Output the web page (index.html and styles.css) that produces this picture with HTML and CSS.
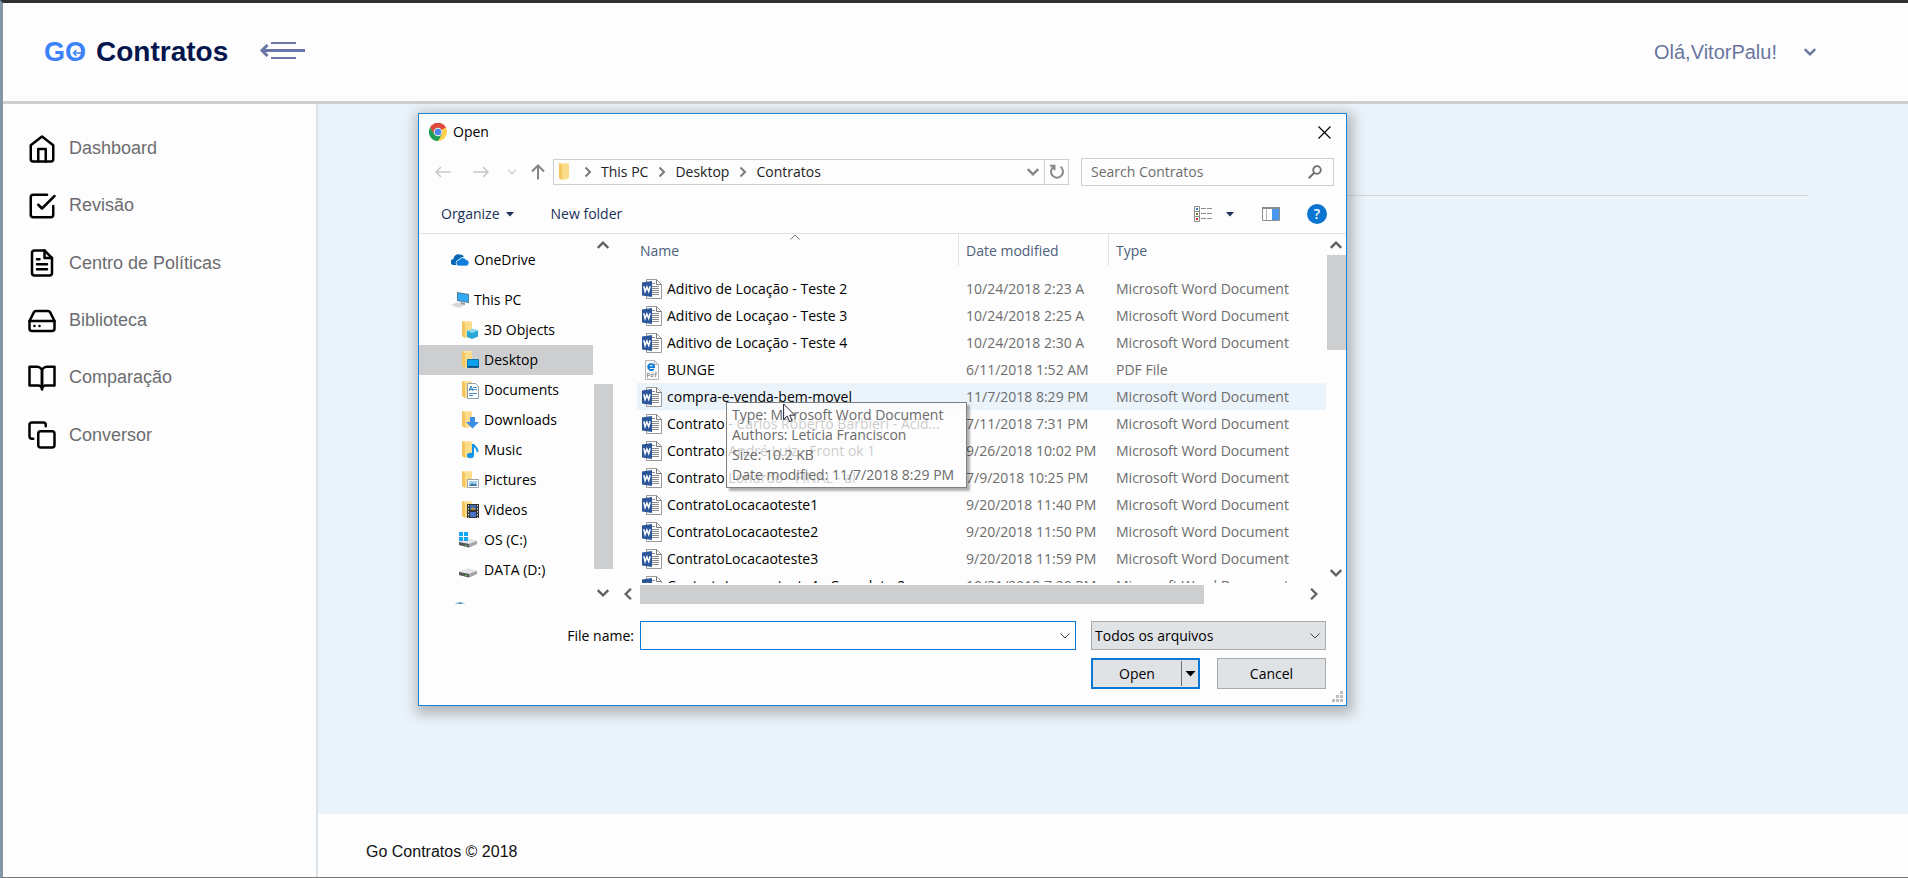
FILE: index.html
```html
<!DOCTYPE html>
<html lang="pt-BR">
<head>
    <meta charset="UTF-8">
    <meta name="viewport" content="width=device-width, initial-scale=1.0">
    <title>Go Contratos</title>
    <link rel="stylesheet" href="styles.css">
</head>
<body>
    <!-- Shared icons -->
    <svg class="sprite" aria-hidden="true">
        <symbol id="chevron-down" viewBox="0 0 12 12"><path d="M1.5 3.5L6 8l4.5-4.5" fill="none" stroke="currentColor"/></symbol>
        <symbol id="chevron-up" viewBox="0 0 12 12"><path d="M1.5 8.5L6 4l4.5 4.5" fill="none" stroke="currentColor"/></symbol>
        <symbol id="chevron-left" viewBox="0 0 12 12"><path d="M8.5 1.5L4 6l4.5 4.5" fill="none" stroke="currentColor"/></symbol>
        <symbol id="chevron-right" viewBox="0 0 12 12"><path d="M3.5 1.5L8 6l-4.5 4.5" fill="none" stroke="currentColor"/></symbol>
        <symbol id="caret" viewBox="0 0 10 6"><path d="M0 0h10L5 5.5z" fill="currentColor"/></symbol>
        <symbol id="word" viewBox="0 0 20 20">
            <path d="M4.5.5h10l5 5v14h-15z" fill="#fff" stroke="#9a9a9a"/>
            <path d="M14.500.5v5h5" fill="none" stroke="#7a7a7a"/>
            <path d="M10 4.500h3M10 7.500h7M10 9.500h7M10 11.500h7M10 13.500h7M10 15.500h7" stroke="#8a8a8a"/>
            <path d="M0 3.500L10 2v16L0 16.500z" fill="#2b579a"/>
            <path d="M1.800 7.300l1.300 5.200L4.900 8l1.800 4.500L8.100 7.300" fill="none" stroke="#fff" stroke-width="1.500"/>
        </symbol>
        <symbol id="pdf" viewBox="0 0 20 20">
            <path d="M3.500.5h9l4 4v15h-13z" fill="#f6f8fa" stroke="#b5b5b5"/>
            <path d="M12.500.5v4h4" fill="none" stroke="#b5b5b5"/>
            <path d="M5.700 7.200h6.400c0-4.200-5.800-4-5.900-.3 0 3.300 3.300 3.700 5.600 2.300" fill="none" stroke="#0a78d7" stroke-width="1.800"/>
            <path d="M5.500 13v5M5.500 13.500h2v2h-2M11 12.500v4H9v-2h2M13.500 17v-4.500h1.500M12.500 14.500h2.500" fill="none" stroke="#8a8a8a" stroke-width=".8"/>
        </symbol>
        <symbol id="folder" viewBox="0 0 18 18">
            <path d="M1 0h9l1 1v14l-4 2-6-2z" fill="#ffe39a"/>
            <path d="M1 0l3 2v15l-3-2z" fill="#f3c55f"/>
            <path d="M4 2l7-1v14l-7 2z" fill="#fbdc8b"/>
        </symbol>
        <symbol id="drive" viewBox="0 0 18 10">
            <path d="M0 4l9-3.500L18 3v3l-8 3.500L0 7z" fill="#b9bcbe"/>
            <path d="M0 4l9-3.500L18 3l-8 3z" fill="#e3e5e6"/>
            <path d="M0 4l10 2v3.500L0 7z" fill="#55585a"/>
            <path d="M10 6l8-3v3l-8 3.500z" fill="#a3a6a8"/>
            <path d="M6 7.300l2 .4" stroke="#6fd05a"/>
        </symbol>
    </svg>

    <div class="app">
        <header class="topbar">
            <a class="logo" href="#" aria-label="GO Contratos">
                <span class="logo-go">GO<svg class="logo-arrow" viewBox="0 0 10 8"><path d="M9.500 4H1.500M4.500 1l-3 3 3 3" fill="none" stroke="currentColor" stroke-width="1.500"/></svg></span>
                <span>Contratos</span>
            </a>
            <button class="menu-toggle" aria-label="Recolher menu">
                <svg viewBox="0 0 46 18" width="46" height="18">
                    <path d="M12 1h25M12 16h25" stroke="currentColor" stroke-width="2"/>
                    <path d="M3 8.500h43" stroke="currentColor" stroke-width="3"/>
                    <path d="M8.500 3L3 8.500 8.500 14" fill="none" stroke="currentColor" stroke-width="3"/>
                </svg>
            </button>
            <button class="user">
                Olá,VitorPalu!
                <svg width="14" height="14"><use href="#chevron-down"/></svg>
            </button>
        </header>

        <nav class="sidebar">
            <ul class="menu">
                <li><a href="#">
                    <svg viewBox="0 0 24 24"><path d="M3 9l9-7 9 7v11a2 2 0 0 1-2 2H5a2 2 0 0 1-2-2z"/><path d="M9 22V12h6v10"/></svg>
                    Dashboard</a></li>
                <li><a href="#">
                    <svg viewBox="0 0 24 24"><path d="M9 11l3 3L22 4"/><path d="M21 12v7a2 2 0 0 1-2 2H5a2 2 0 0 1-2-2V5a2 2 0 0 1 2-2h11"/></svg>
                    Revisão</a></li>
                <li><a href="#">
                    <svg viewBox="0 0 24 24"><path d="M14 2H6a2 2 0 0 0-2 2v16a2 2 0 0 0 2 2h12a2 2 0 0 0 2-2V8z"/><path d="M14 2v6h6M16 13H8M16 17H8M10 9H8"/></svg>
                    Centro de Políticas</a></li>
                <li><a href="#">
                    <svg viewBox="0 0 24 24"><path d="M22 12H2"/><path d="M5.450 5.110L2 12v6a2 2 0 0 0 2 2h16a2 2 0 0 0 2-2v-6l-3.450-6.890A2 2 0 0 0 16.760 4H7.240a2 2 0 0 0-1.790 1.110z"/><path d="M6 16h.01M10 16h.01"/></svg>
                    Biblioteca</a></li>
                <li><a href="#">
                    <svg viewBox="0 0 24 24"><path d="M2 3h6a4 4 0 0 1 4 4v14a3 3 0 0 0-3-3H2z"/><path d="M22 3h-6a4 4 0 0 0-4 4v14a3 3 0 0 1 3-3h7z"/></svg>
                    Comparação</a></li>
                <li><a href="#">
                    <svg viewBox="0 0 24 24"><rect x="9" y="9" width="13" height="13" rx="2"/><path d="M5 15H4a2 2 0 0 1-2-2V4a2 2 0 0 1 2-2h9a2 2 0 0 1 2 2v1"/></svg>
                    Conversor</a></li>
            </ul>
        </nav>

        <main class="content">
            <hr class="divider">
        </main>

        <footer class="footer">Go Contratos © 2018</footer>
    </div>

    <!-- File picker -->
    <section class="dialog" role="dialog" aria-labelledby="dialog-title">
        <div class="titlebar">
            <svg width="18" height="18" viewBox="0 0 18 18">
                <circle cx="9" cy="9" r="9" fill="#fbd04b"/>
                <path d="M9 9L1.200 4.500A9 9 0 0 1 16.800 4.500z" fill="#dd4b3e"/>
                <path d="M9 4.500h7.800A9 9 0 0 0 1.200 4.500L5 11z" fill="#dd4b3e"/>
                <path d="M1.200 4.500A9 9 0 0 0 9 18l4-7-4 2-4-2z" fill="#1c9e58"/>
                <circle cx="9" cy="9" r="4.200" fill="#f3f3f3"/>
                <circle cx="9" cy="9" r="3.300" fill="#4a87ee"/>
            </svg>
            <span id="dialog-title">Open</span>
            <button class="close" aria-label="Close">
                <svg width="13" height="13" viewBox="0 0 13 13"><path d="M.5.5l12 12M12.500.5l-12 12" stroke="currentColor" stroke-width="1.200"/></svg>
            </button>
        </div>

        <div class="location">
            <div class="history">
                <button aria-label="Back"><svg width="16" height="12" viewBox="0 0 16 12"><path d="M15.500 6H1.500M6 1L1 6l5 5" fill="none" stroke="currentColor" stroke-width="1.500"/></svg></button>
                <button aria-label="Forward"><svg width="16" height="12" viewBox="0 0 16 12"><path d="M.5 6h14M10 1l5 5-5 5" fill="none" stroke="currentColor" stroke-width="1.500"/></svg></button>
                <button class="recent" aria-label="Recent locations"><svg width="10" height="10" stroke-width="1.500"><use href="#chevron-down"/></svg></button>
                <button class="up" aria-label="Up"><svg width="14" height="16" viewBox="0 0 14 16"><path d="M7 15.500V2M1 7.500l6-6 6 6" fill="none" stroke="currentColor" stroke-width="2"/></svg></button>
            </div>
            <div class="address">
                <svg class="address-icon" width="18" height="18"><use href="#folder"/></svg>
                <svg class="crumb-arrow" width="12" height="12"><use href="#chevron-right"/></svg>
                <a href="#">This PC</a>
                <svg class="crumb-arrow" width="12" height="12"><use href="#chevron-right"/></svg>
                <a href="#">Desktop</a>
                <svg class="crumb-arrow" width="12" height="12"><use href="#chevron-right"/></svg>
                <a href="#">Contratos</a>
                <button class="address-drop" aria-label="Previous locations"><svg width="14" height="14"><use href="#chevron-down"/></svg></button>
                <button class="refresh" aria-label="Refresh">
                    <svg width="16" height="16" viewBox="0 0 16 16"><path d="M11.500 2.800a6 6 0 1 1-7 0M1 1.800h4.500v4.500" fill="none" stroke="currentColor" stroke-width="2"/></svg>
                </button>
            </div>
            <div class="search">
                <input type="search" placeholder="Search Contratos" aria-label="Search Contratos">
                <svg width="14" height="14" viewBox="0 0 14 14"><circle cx="9" cy="5" r="3.800" fill="none" stroke="currentColor" stroke-width="1.800"/><path d="M6.200 7.800L.8 13.200" stroke="currentColor" stroke-width="2"/></svg>
            </div>
        </div>

        <div class="toolbar">
            <button>Organize <svg width="8" height="5"><use href="#caret"/></svg></button>
            <button>New folder</button>
            <div class="toolbar-right">
                <button aria-label="Change your view">
                    <svg width="18" height="16" viewBox="0 0 18 16">
                        <path d="M.5.500h5v15h-5zM.5 5.500h5M.5 10.500h5" fill="none" stroke="#8c8c8c"/>
                        <path d="M7 2.500h5M13 2.500h5M7 7.500h5M13 7.500h5M7 12.500h5M13 12.500h5" stroke="#8c8c8c"/>
                        <path d="M2 2h2v2H2z" fill="#3a7ebf"/><path d="M2 7h2v2H2z" fill="#7a7a3a"/><path d="M2 12h2v2H2z" fill="#d22"/>
                    </svg>
                </button>
                <button aria-label="More options"><svg width="8" height="5"><use href="#caret"/></svg></button>
                <button class="preview" aria-label="Show the preview pane">
                    <svg width="18" height="14" viewBox="0 0 18 14">
                        <path d="M.5.500h17v13H.5z" fill="#fff" stroke="#8c8c8c"/>
                        <path d="M0 0h18v2H0z" fill="#8c8c8c"/><path d="M4.500 2v11" stroke="#b5b5b5"/>
                        <path d="M10 2h7v11h-7z" fill="#4a97f0"/>
                    </svg>
                </button>
                <button class="help" aria-label="Get help">?</button>
            </div>
        </div>

        <div class="explorer">
            <ul class="tree">
                <li class="root">
                    <svg viewBox="0 0 18 18"><path d="M3 14a3 3 0 0 1-.5-6A4.500 4.500 0 0 1 8 3.500a5 5 0 0 1 5 2L8 8l-2 6z" fill="#0364b8"/><path d="M8 15a3 3 0 0 1 0-6 4 4 0 0 1 7-.5 3.300 3.300 0 0 1 .5 6.500z" fill="#0f7bdb" stroke="#fdfdfd" stroke-width=".7"/></svg>
                    OneDrive</li>
                <li class="root gap">
                    <svg viewBox="0 0 18 18"><path d="M6 1l12 2v9L6 10z" fill="#4d7f9f"/><path d="M7 2.200l10 1.700v6.900L7 9.100z" fill="#33aaf5"/><path d="M0 14l6-2.500 8 2L8 17z" fill="#d4d8db"/><path d="M9 11l5 1v2l-4-1z" fill="#8d979e"/></svg>
                    This PC</li>
                <li><svg viewBox="0 0 18 18"><use href="#folder"/><path d="M6 10l6-2 5 1.500v6L11 18l-5-2z" fill="#29a8d8"/><path d="M6 10l6-2 5 1.500L11 12z" fill="#8adcf5"/></svg>3D Objects</li>
                <li class="selected"><svg viewBox="0 0 18 18"><use href="#folder"/><path d="M6.500 8.500h11v8h-11z" fill="#0aa0ee" stroke="#1170ad"/><path d="M7 15h10v1.500H7z" fill="#0c4c78"/></svg>Desktop</li>
                <li><svg viewBox="0 0 18 18"><use href="#folder"/><path d="M6.500 2.500h8l3 3v12h-11z" fill="#fff" stroke="#8fa2b2"/><path d="M8 12.500h8M8 14.500h4M12 6.500h4M12 8.500h4" stroke="#4a8fc4"/><path d="M8 10l2-5 2 5M8.500 8.500h3" fill="none" stroke="#2c7cbe"/></svg>Documents</li>
                <li><svg viewBox="0 0 18 18"><use href="#folder"/><path d="M9 6h5v5h4l-6.500 6.500L5 11h4z" fill="#3c8ee8"/></svg>Downloads</li>
                <li><svg viewBox="0 0 18 18"><use href="#folder"/><path d="M12 3v11" stroke="#1095e8" stroke-width="2"/><path d="M12 3c1 3 5 3.500 4.500 8" fill="none" stroke="#1095e8" stroke-width="2"/><ellipse cx="9.500" cy="14.500" rx="3.500" ry="2.800" fill="#1095e8"/></svg>Music</li>
                <li><svg viewBox="0 0 18 18"><use href="#folder"/><path d="M6.500 8.500h11v8h-11z" fill="#fff" stroke="#9aa6ae"/><path d="M8 10h8v5H8z" fill="#9fd0f0"/><path d="M8 15l3-3 2 1.500 1.500-1L16 15z" fill="#3f77a0"/></svg>Pictures</li>
                <li><svg viewBox="0 0 18 18"><use href="#folder"/><path d="M6 3h12v14H6z" fill="#333"/><path d="M9 4h6v5H9z" fill="#3f6fb0"/><path d="M9 11h6v5H9z" fill="#4a72c8"/><path d="M7.500 4v13M16.500 4v13" stroke="#ddd" stroke-dasharray="1.500 1.500"/><path d="M9 9l3-3 3 3z" fill="#b98a3c"/></svg>Videos</li>
                <li class="disk"><svg viewBox="0 0 18 18"><use href="#drive" x="0" y="7" width="18" height="10"/><path d="M0 1h4v4H0zM5 1h4v4H5zM0 6h4v4H0zM5 6h4v4H5z" fill="#12a5f0"/></svg>OS (C:)</li>
                <li class="disk"><svg viewBox="0 0 18 18"><use href="#drive" x="0" y="7" width="18" height="10"/></svg>DATA (D:)</li>
                <li class="root gap"><svg viewBox="0 0 18 18"><circle cx="9" cy="9" r="8" fill="#8fc3da"/><path d="M9 1l4 5-6 2z" fill="#2c6f9c"/></svg>Network</li>
            </ul>
            <div class="scroll-y">
                <svg width="14" height="14"><use href="#chevron-up"/></svg>
                <div class="thumb tree-thumb"></div>
                <svg width="14" height="14"><use href="#chevron-down"/></svg>
            </div>

            <div class="files">
                <table class="file-table">
                    <colgroup><col><col class="col-date"><col class="col-type"></colgroup>
                    <thead>
                        <tr>
                            <th><span>Name</span><svg class="sort" width="12" height="12"><use href="#chevron-up"/></svg></th>
                            <th><span>Date modified</span></th>
                            <th><span>Type</span></th>
                        </tr>
                    </thead>
                    <tbody>
                        <tr><td><svg><use href="#word"/></svg>Aditivo de Locação - Teste 2</td><td>10/24/2018 2:23 A</td><td>Microsoft Word Document</td></tr>
                        <tr><td><svg><use href="#word"/></svg>Aditivo de Locaçao - Teste 3</td><td>10/24/2018 2:25 A</td><td>Microsoft Word Document</td></tr>
                        <tr><td><svg><use href="#word"/></svg>Aditivo de Locação - Teste 4</td><td>10/24/2018 2:30 A</td><td>Microsoft Word Document</td></tr>
                        <tr><td><svg><use href="#pdf"/></svg>BUNGE</td><td>6/11/2018 1:52 AM</td><td>PDF File</td></tr>
                        <tr class="hovered"><td><svg><use href="#word"/></svg>compra-e-venda-bem-movel</td><td>11/7/2018 8:29 PM</td><td>Microsoft Word Document</td></tr>
                        <tr><td><svg><use href="#word"/></svg>Contrato - Carlos Roberto Barbieri - Acid...</td><td>7/11/2018 7:31 PM</td><td>Microsoft Word Document</td></tr>
                        <tr><td><svg><use href="#word"/></svg>Contrato André Luiz - Front ok 1</td><td>9/26/2018 10:02 PM</td><td>Microsoft Word Document</td></tr>
                        <tr><td><svg><use href="#word"/></svg>Contrato Lonardo - FINAL - al</td><td>7/9/2018 10:25 PM</td><td>Microsoft Word Document</td></tr>
                        <tr><td><svg><use href="#word"/></svg>ContratoLocacaoteste1</td><td>9/20/2018 11:40 PM</td><td>Microsoft Word Document</td></tr>
                        <tr><td><svg><use href="#word"/></svg>ContratoLocacaoteste2</td><td>9/20/2018 11:50 PM</td><td>Microsoft Word Document</td></tr>
                        <tr><td><svg><use href="#word"/></svg>ContratoLocacaoteste3</td><td>9/20/2018 11:59 PM</td><td>Microsoft Word Document</td></tr>
                        <tr><td><svg><use href="#word"/></svg>ContratoLocacaoteste4 - Completo 2</td><td>10/21/2018 7:20 PM</td><td>Microsoft Word Document</td></tr>
                    </tbody>
                </table>
            </div>
            <div class="scroll-y files-scroll">
                <svg width="14" height="14"><use href="#chevron-up"/></svg>
                <div class="thumb files-thumb"></div>
                <svg width="14" height="14"><use href="#chevron-down"/></svg>
            </div>
            <div class="scroll-x">
                <svg width="14" height="14"><use href="#chevron-left"/></svg>
                <div class="thumb"></div>
                <svg width="14" height="14"><use href="#chevron-right"/></svg>
            </div>
        </div>

        <form class="actions">
            <div class="fields">
                <label for="file-name">File name:</label>
                <div class="combo name-combo">
                    <input type="text" id="file-name">
                    <svg width="12" height="12"><use href="#chevron-down"/></svg>
                </div>
                <div class="combo type-combo">
                    <select aria-label="File type"><option>Todos os arquivos</option></select>
                    <svg width="12" height="12"><use href="#chevron-down"/></svg>
                </div>
            </div>
            <div class="buttons">
                <div class="split">
                    <button type="button">Open</button>
                    <button type="button" class="split-drop" aria-label="Open options"><svg width="11" height="6"><use href="#caret"/></svg></button>
                </div>
                <button type="button" class="cancel">Cancel</button>
            </div>
        </form>

        <svg class="grip" width="11" height="11" viewBox="0 0 11 11"><path d="M8 0h3v3H8zM4 4h3v3H4zM8 4h3v3H8zM0 8h3v3H0zM4 8h3v3H4zM8 8h3v3H8z" fill="#bdbdbd"/></svg>

        <div class="tooltip" role="tooltip">
            Type: Microsoft Word Document<br>
            Authors: Letícia Franciscon<br>
            Size: 10.2 KB<br>
            Date modified: 11/7/2018 8:29 PM
        </div>
        <svg class="cursor" width="13" height="20" viewBox="0 0 13 20"><path d="M.6 1v15.500l3.600-3.400 2.400 5.600 2.500-1-2.400-5.500h5z" fill="#fff" stroke="#223"/></svg>
    </section>
</body>
</html>
```

FILE: styles.css
```css
* {
    box-sizing: border-box;
}
body {
    margin: 0;
    background-color: #fdfdfd;
    font-family: "Liberation Sans", Arial, sans-serif;
    color: #111;
}
button {
    background: none;
    border: 0;
    padding: 0;
    font: inherit;
    color: inherit;
}
a {
    color: inherit;
    text-decoration: none;
}
ul {
    list-style: none;
    margin: 0;
    padding: 0;
}
.sprite {
    position: absolute;
    width: 0;
    height: 0;
}

/* Page shell */
.app {
    display: grid;
    grid-template-columns: 315px 1fr;
    grid-template-rows: 101px 1fr 63px;
    min-height: 100vh;
    border-top: 3px solid #2e3230;
    border-left: 3px solid #8397a8;
    border-bottom: 1px solid #777;
}
.topbar {
    grid-column: 1 / 3;
    display: flex;
    align-items: center;
    padding: 0 91px 0 41px;
    border-bottom: 3px solid #cdcfd1;
}
.logo {
    display: flex;
    align-items: center;
    gap: 10px;
    font-size: 28px;
    font-weight: bold;
    color: #04164d;
}
.logo-go {
    position: relative;
    font-size: 27px;
    color: #3c82fb;
}
.logo-arrow {
    position: absolute;
    right: 4px;
    top: 12px;
    width: 10px;
    height: 8px;
}
.menu-toggle {
    display: flex;
    margin-left: 31px;
    padding-bottom: 2px;
    color: #6a75a8;
}
.user {
    display: flex;
    align-items: center;
    gap: 26px;
    margin-left: auto;
    font-size: 20px;
    color: #6a75a0;
}
.user svg {
    stroke-width: 2;
}
.sidebar {
    grid-row: 2 / 4;
    padding-top: 16px;
    border-right: 2px solid #dbe3e8;
}
.menu {
    display: grid;
    grid-auto-rows: 1fr;
    height: 344px;
}
.menu a {
    display: flex;
    align-items: center;
    gap: 12px;
    height: 100%;
    padding-left: 24px;
    font-size: 18px;
    color: #6c6c70;
}
.menu svg {
    width: 30px;
    height: 30px;
    fill: none;
    stroke: #000;
    stroke-width: 2;
    stroke-linecap: round;
    stroke-linejoin: round;
}
.content {
    padding: 91px 100px 0;
    background-color: #ebf3fa;
}
.divider {
    margin: 0;
    border: 0;
    border-top: 1px solid #d2d9de;
}
.footer {
    display: flex;
    align-items: center;
    padding: 12px 48px 0;
    font-size: 16px;
}

/* File picker */
.dialog {
    position: absolute;
    left: 418px;
    top: 113px;
    width: 929px;
    background-color: #fdfdfd;
    border: 1px solid #1883d7;
    box-shadow: 2px 4px 12px 4px rgba(0, 0, 0, 0.25);
    font-family: "Open Sans", "Segoe UI", sans-serif;
    font-size: 14px;
    line-height: 20px;
    color: #000;
}
.dialog svg {
    flex: none;
}
.titlebar {
    display: flex;
    align-items: center;
    gap: 6px;
    height: 36px;
    padding: 0 15px 0 10px;
}
.close {
    display: flex;
    margin-left: auto;
}
.location {
    display: flex;
    align-items: center;
    gap: 12px;
    height: 44px;
    padding-right: 12px;
}
.history {
    display: flex;
    align-items: center;
    width: 122px;
    padding-left: 16px;
    color: #c6c6c6;
}
.history button {
    display: flex;
    margin-right: 22px;
}
.history .recent {
    margin: 0 14px 0 -4px;
}
.history .up {
    margin: 0;
    color: #858585;
}
.address {
    display: flex;
    flex: 1;
    align-items: center;
    height: 26px;
    border: 1px solid #ccced0;
    color: #222;
}
.address-icon {
    margin: 0 6px 0 4px;
}
.crumb-arrow {
    margin: 0 7px 0 0;
    color: #7a7a7a;
    stroke-width: 2;
}
.address a {
    margin-right: 8px;
}
.address-drop {
    display: flex;
    margin-left: auto;
    margin-right: 4px;
    color: #858585;
    stroke-width: 2;
}
.refresh {
    display: flex;
    align-items: center;
    justify-content: center;
    width: 24px;
    height: 24px;
    border-left: 1px solid #ccced0;
    color: #8a8a8a;
}
.search {
    display: flex;
    align-items: center;
    width: 253px;
    height: 28px;
    padding: 0 11px 0 9px;
    border: 1px solid #ccced0;
    color: #6d6d6d;
}
.search input {
    flex: 1;
    min-width: 0;
    padding: 0;
    border: 0;
    background: none;
    font: inherit;
}
.search input::placeholder {
    color: #6d6d6d;
}
.toolbar {
    display: flex;
    align-items: center;
    gap: 37px;
    height: 40px;
    padding: 1px 19px 0 22px;
    border-bottom: 1px solid #dfe3e6;
    color: #1a3158;
}
.toolbar button {
    display: flex;
    align-items: center;
    gap: 6px;
}
.toolbar-right {
    display: flex;
    align-items: center;
    gap: 14px;
    margin-left: auto;
}
.toolbar .preview {
    margin: 0 13px 0 14px;
}
.toolbar .help {
    justify-content: center;
    width: 20px;
    height: 20px;
    border-radius: 50%;
    background-color: #0a74d1;
    color: #fff;
    font-weight: 600;
}

/* Tree and file list */
.explorer {
    display: grid;
    grid-template-columns: 174px 20px 24px 1fr 20px;
    grid-template-rows: 350px 20px;
}
.tree {
    grid-row: 1 / 3;
    padding-top: 11px;
    height: 370px;
    overflow: hidden;
}
.tree li {
    display: flex;
    align-items: center;
    gap: 5px;
    height: 30px;
    padding-left: 42px;
}
.tree .root {
    padding-left: 32px;
}
.tree .gap {
    margin-top: 10px;
}
.tree .disk {
    padding-left: 40px;
    gap: 7px;
}
.tree .selected {
    background-color: #cdced0;
}
.tree svg {
    width: 18px;
    height: 18px;
}
.scroll-y {
    display: flex;
    flex-direction: column;
    align-items: center;
    justify-content: space-between;
    padding: 4px 0;
    color: #606060;
    stroke-width: 2;
}
.scroll-y:nth-child(2) {
    grid-row: 1 / 3;
}
.thumb {
    background-color: #cdced0;
}
.tree-thumb {
    width: 19px;
    height: 185px;
    margin-top: 114px;
}
.files-thumb {
    width: 19px;
    height: 95px;
    margin: 3px 0 auto;
}
.files {
    grid-column: 4;
    overflow: hidden;
    height: 349px;
}
.files-scroll {
    grid-column: 5;
}
.scroll-x {
    grid-row: 2;
    grid-column: 3 / 5;
    display: flex;
    align-items: center;
    justify-content: space-between;
    padding: 0 5px 0 8px;
    color: #606060;
    stroke-width: 2;
}
.scroll-x .thumb {
    width: 564px;
    height: 19px;
    margin: 0 auto 0 5px;
}
.file-table {
    width: 100%;
    table-layout: fixed;
    border-collapse: collapse;
    white-space: nowrap;
}
.col-date {
    width: 150px;
}
.col-type {
    width: 218px;
}
.file-table th {
    position: relative;
    height: 41px;
    padding: 0;
    vertical-align: top;
    text-align: left;
    font-weight: normal;
    color: #4c607a;
}
.file-table th span {
    display: block;
    height: 32px;
    padding-left: 7px;
    border-left: 1px solid #dfe3e6;
    line-height: 34px;
}
.file-table th:first-child span {
    padding-left: 3px;
    border: 0;
}
.sort {
    position: absolute;
    left: 152px;
    top: -3px;
    color: #777;
}
.file-table td {
    height: 27px;
    padding: 0 0 0 8px;
    color: #6d6d6d;
}
.file-table td:first-child {
    display: flex;
    align-items: center;
    gap: 5px;
    padding-left: 5px;
    color: #000;
}
.file-table td svg {
    width: 20px;
    height: 20px;
}
.hovered {
    background-color: #ebf3fb;
}

/* Bottom controls */
.actions {
    padding: 17px 20px 16px;
}
.fields,
.buttons {
    display: flex;
    align-items: center;
    justify-content: flex-end;
}
.combo {
    display: flex;
    align-items: center;
    height: 29px;
    border: 1px solid #0a78d7;
    color: #444;
}
.combo input,
.combo select {
    appearance: none;
    flex: 1;
    min-width: 0;
    height: 100%;
    padding: 0 3px;
    border: 0;
    outline: 0;
    background: none;
    font: inherit;
    color: #000;
}
.combo svg {
    margin-right: 4px;
}
.name-combo {
    width: 436px;
    margin: 0 15px 0 6px;
}
.type-combo {
    width: 235px;
    background-color: #e0e3e6;
    border-color: #a8aaac;
}
.buttons {
    gap: 17px;
    margin-top: 8px;
}
.split,
.cancel {
    width: 109px;
    height: 31px;
    background-color: #e0e3e6;
    border: 1px solid #a8aaac;
}
.split {
    display: flex;
    align-items: center;
    border: 2px solid #0a78d7;
}
.split button:first-child {
    flex: 1;
}
.split-drop {
    display: flex;
    align-items: center;
    justify-content: center;
    width: 17px;
    height: 25px;
    border-left: 1px solid #707070;
}
.grip {
    position: absolute;
    right: 3px;
    bottom: 3px;
}
.tooltip {
    position: absolute;
    left: 307px;
    top: 288px;
    min-width: 241px;
    padding: 2px 5px;
    border: 1px solid #808080;
    background-color: rgba(253, 253, 253, 0.8);
    box-shadow: 3px 3px 2px rgba(0, 0, 0, 0.3);
    color: #6b6b6b;
    white-space: nowrap;
}
.cursor {
    position: absolute;
    left: 364px;
    top: 289px;
}
```
